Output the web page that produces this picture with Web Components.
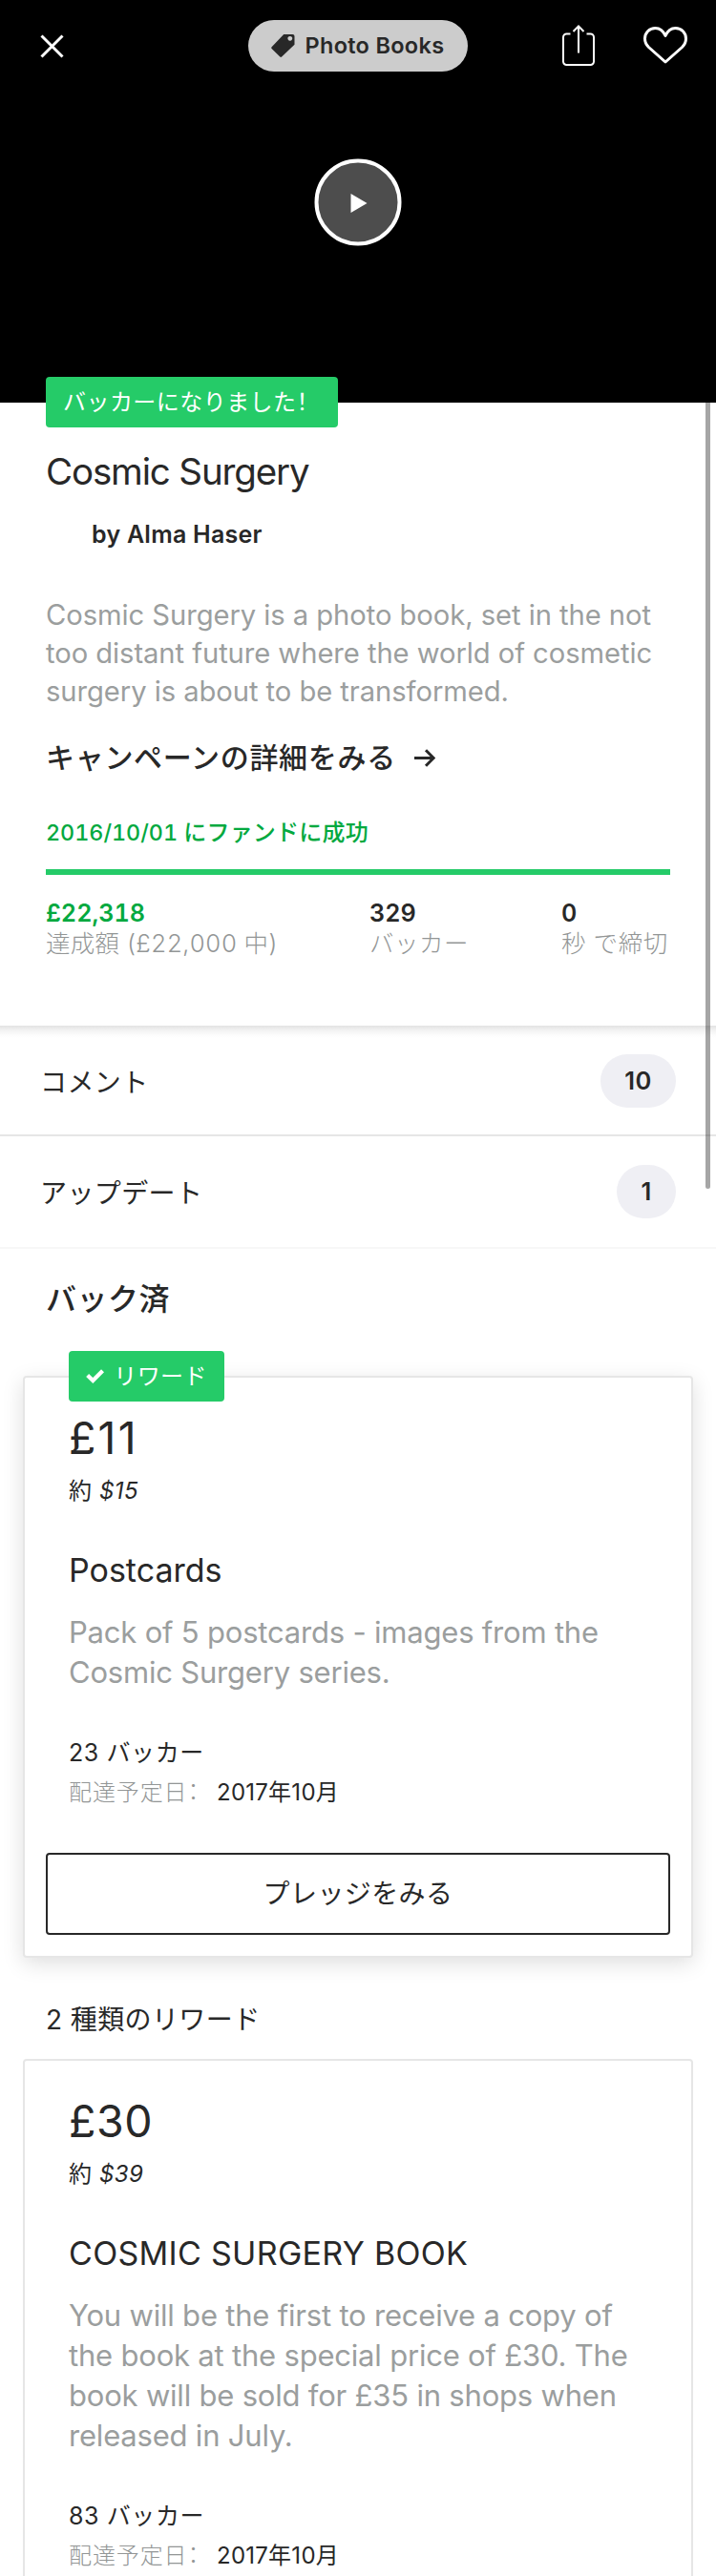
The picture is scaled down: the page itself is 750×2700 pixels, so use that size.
<!DOCTYPE html>
<html lang="ja">
<head>
<meta charset="utf-8">
<title>Cosmic Surgery</title>
<style>
  html, body { margin: 0; }
  body {
    width: 750px; height: 2700px; overflow: hidden; background: #fff; color: #282828;
    font-family: Inter, "Noto Sans CJK JP", sans-serif;
  }
</style>
</head>
<body>
<project-page>
  <project-hero>Photo Books</project-hero>
  <project-summary>
    <status-badge slot="badge" style="width:306px"><span>バッカーになりました<span style="font-feature-settings:'halt'">！</span></span></status-badge>
    <span slot="title">Cosmic Surgery</span>
    <span slot="author">by Alma Haser</span>
    <span slot="blurb">Cosmic Surgery is a photo book, set in the not too distant future where the world of cosmetic surgery is about to be transformed.</span>
    <span slot="link">キャンペーンの詳細をみる</span>
    <span slot="date">2016/10/01 <span style="font-size:24px;letter-spacing:.2px">にファンドに成功</span></span>
    <funding-stat slot="stats" value="£22,318" style="--value:#03a93f">達成額 (£22,000 中)</funding-stat>
    <funding-stat slot="stats" value="329" style="--label-spacing:.5px">バッカー</funding-stat>
    <funding-stat slot="stats" value="0" style="--label-spacing:.6px">秒 で締切</funding-stat>
  </project-summary>
  <count-row class="first" count="10">コメント</count-row>
  <count-row class="last" count="1">アップデート</count-row>
  <section-title class="strong">バック済</section-title>
  <reward-card raised price="£11" approx="$15" backers="23" date="2017年10月" style="--price-spacing:2.2px">
    <status-badge slot="badge" check style="width:163px">リワード</status-badge>
    <span slot="title">Postcards</span>
    Pack of 5 postcards - images from the Cosmic Surgery series.
    <pledge-button slot="action">プレッジをみる</pledge-button>
  </reward-card>
  <section-title>2 種類のリワード</section-title>
  <reward-card price="£30" approx="$39" backers="83" date="2017年10月">
    <span slot="title" style="letter-spacing:.3px">COSMIC SURGERY BOOK</span>
    You will be the first to receive a copy of the book at the special price of £30. The book will be sold for £35 in shops when released in July.
  </reward-card>
</project-page>

<script>
const define = (name, html, setup) => {
  const tpl = document.createElement('template');
  tpl.innerHTML = html;
  customElements.define(name, class extends HTMLElement {
    constructor() {
      super();
      this.attachShadow({ mode: 'open' }).append(tpl.content.cloneNode(true));
    }
    connectedCallback() { if (setup) setup(this, this.shadowRoot); }
  });
};
const fill = (root, id, text) => { root.getElementById(id).textContent = text; };

define('project-page', `
<style>
  :host { display: block; position: relative; height: 2700px; overflow: hidden; }
  .bar { position: absolute; z-index: 5; top: 422px; right: 6px; width: 5px; height: 824px;
         border-radius: 0 0 3px 3px; background: rgba(0,0,0,.35); }
</style>
<slot></slot><div class="bar"></div>`);

define('project-hero', `
<style>
  :host { display: block; height: 422px; background: #000; color: #fff; }
  header { display: grid; grid-template-columns: 1fr auto 1fr; align-items: center; height: 96px; padding: 0 30px; }
  svg { display: block; }
  .close { margin-left: 12px; }
  .pill { display: flex; align-items: center; box-sizing: border-box; width: 230px; height: 54px; padding-left: 24px; gap: 10.5px;
          border-radius: 27px; background: #ccc; color: #282828; font: 600 23.5px/54px Inter, sans-serif; letter-spacing: .3px; white-space: nowrap; }
  .actions { display: flex; justify-content: flex-end; align-items: center; gap: 51px; padding-bottom: 2px; }
  .play { display: block; margin: 70px auto 0; }
</style>
<header>
  <svg class="close" width="25" height="25" viewBox="0 0 25 25" stroke="#fff" stroke-width="3" fill="none"><path d="M1.5 1.5l22 22M23.5 1.5l-22 22"/></svg>
  <div class="pill">
    <svg width="25" height="25" viewBox="0 0 25 25" fill="#282828"><path fill-rule="evenodd" d="M13.2 0H22.500Q24.500 0 24.500 2V10.800L11.100 23.600Q10.200 24.400 9.300 23.600L.6 15Q-.2 14.100 .6 13.200ZM19.800 1.900a2.400 2.400 0 1 0 .01 0Z"/></svg>
    <slot></slot>
  </div>
  <div class="actions">
    <svg width="34" height="43" viewBox="0 0 34 43" stroke="#fff" stroke-width="2" fill="none"><path d="M8.500 9.500H4.500A3.500 3.500 0 0 0 1 13v25.500A3.500 3.500 0 0 0 4.500 42h25a3.500 3.500 0 0 0 3.500-3.500V13a3.500 3.500 0 0 0-3.500-3.500H25.500M17 29.500V1.500M11.500 7L17 1.500 22.500 7"/></svg>
    <svg width="46" height="39" viewBox="0 0 46 39" stroke="#fff" stroke-width="3" stroke-linejoin="round" fill="none"><path d="M23 9.500C20.500 4 16.500 1.500 12.500 1.500 6 1.500 1.500 6.500 1.500 12.500 1.500 16 3 19 5.500 21.500L23 37 40.500 21.500C43 19 44.500 16 44.500 12.500 44.500 6.500 40 1.500 33.500 1.500 29.500 1.500 25.500 4 23 9.500Z"/></svg>
  </div>
</header>
<svg class="play" width="92" height="92" viewBox="0 0 92 92"><circle cx="46" cy="46" r="43.500" fill="#4d4d4d" stroke="#fff" stroke-width="4"/><path d="M38.500 37v20L55.500 47Z" fill="#fff"/></svg>`);

define('status-badge', `
<style>
  :host { display: flex; align-items: center; position: relative; box-sizing: border-box; height: 53px; padding: 0 18px; gap: 10px;
          border-radius: 4px; background: #25cb68; color: #fff; font-size: 24px; font-weight: 400; line-height: 53px; letter-spacing: .45px; white-space: nowrap; }
  svg { display: none; }
  :host([check]) svg { display: block; }
</style>
<svg width="21" height="17" viewBox="0 0 21 17" fill="none" stroke="#fff" stroke-width="4.600"><path d="M1.800 7.500L8 13.500 19.200 2.200"/></svg>
<slot></slot>`);

define('project-summary', `
<style>
  :host { display: flow-root; box-sizing: border-box; height: 653px; padding: 0 48px; }
  .badge { display: flex; margin-top: -27px; height: 53px; }
  h1 { margin: 22px 0 0; font-weight: 400; font-size: 38.500px; line-height: 49px; letter-spacing: -1.150px; }
  .by { margin: 26px 0 0 48px; font-weight: 600; font-size: 25px; line-height: 30px; letter-spacing: .25px; }
  .blurb { margin: 50px 0 0; font-size: 29.200px; line-height: 40px; letter-spacing: -.06px; color: #9b9e9e; }
  .link { display: flex; align-items: center; gap: 19px; margin-top: 29px; font-weight: 500; font-size: 30px; line-height: 40px; letter-spacing: .7px; }
  .date { margin-top: 44px; font-weight: 500; font-size: 23.300px; line-height: 30px; color: #03a93f; font-variant-numeric: tabular-nums; }
  .progress { height: 6px; margin-top: 23px; background: #25cb68; }
  .stats { display: grid; grid-template-columns: 339px 201px 1fr; margin-top: 25px; white-space: nowrap; }
</style>
<div class="badge"><slot name="badge"></slot></div>
<h1><slot name="title"></slot></h1>
<div class="by"><slot name="author"></slot></div>
<p class="blurb"><slot name="blurb"></slot></p>
<div class="link"><slot name="link"></slot>
  <svg width="22" height="19" viewBox="0 0 22 19" fill="none" stroke="#282828" stroke-width="3"><path d="M0 9.500H20M12 1.200L20.200 9.500 12 17.800"/></svg>
</div>
<div class="date"><slot name="date"></slot></div>
<div class="progress"></div>
<div class="stats"><slot name="stats"></slot></div>`);

define('funding-stat', `
<style>
  :host { display: block; font-variant-numeric: tabular-nums; }
  b { display: block; font-weight: 600; font-size: 25.200px; line-height: 30px; color: var(--value, #282828); }
  span { display: block; margin-top: 1px; font-weight: 300; font-size: 25.500px; line-height: 32px; letter-spacing: var(--label-spacing, .2px); color: #939696; }
</style>
<b id="value"></b><span><slot></slot></span>`,
(el, root) => fill(root, 'value', el.getAttribute('value')));

define('count-row', `
<style>
  :host { display: flex; align-items: center; justify-content: space-between; box-sizing: border-box; height: 118px;
          padding: 0 42px; border-bottom: 2px solid #f7f7f7; font-size: 28px; letter-spacing: .4px; }
  :host(.first) { height: 116px; padding-top: 2px; border-bottom-color: #e6e6e6;
          background: linear-gradient(#e2e2e2, #f3f3f3 5px, #fcfcfc 10px, #fff 13px) no-repeat; }
  b { width: 79px; height: 56px; border-radius: 28px; background: #efeff4; text-align: center;
      font-weight: 600; font-size: 25.500px; line-height: 56px; }
  :host(.last) b { width: 62px; }
</style>
<span><slot></slot></span><b id="count"></b>`,
(el, root) => fill(root, 'count', el.getAttribute('count')));

define('section-title', `
<style>
  :host { display: block; margin: 45px 48px 21px; font-size: 28px; line-height: 40px; letter-spacing: .4px; }
  :host(.strong) { margin: 33px 48px 60px; font-size: 32px; font-weight: 500; letter-spacing: .5px; }
</style>
<slot></slot>`);

define('reward-card', `
<style>
  :host { display: block; position: relative; margin: 0 24px; padding: 35px 46px 22px; border: 2px solid #e6e6e6; border-radius: 4px; background: #fff; }
  :host([raised]) { box-shadow: 0 6px 22px rgba(0,0,0,.13); }
  .badge { position: absolute; top: -28px; left: 46px; display: flex; }
  .price { font-size: 46.500px; line-height: 56px; letter-spacing: var(--price-spacing, .5px); }
  .approx { display: flex; gap: 8px; margin-top: 13px; font-size: 24px; line-height: 30px; }
  .approx i { letter-spacing: .4px; }
  h2 { margin: 48px 0 0; font-weight: 400; font-size: 34px; line-height: 40px; }
  p { margin: 24px 0 0; font-size: 31px; line-height: 42px; letter-spacing: -.2px; color: #9b9e9e; }
  .backers { margin-top: 48px; font-size: 25px; line-height: 30px; letter-spacing: .6px; }
  .delivery { display: flex; gap: 6px; margin-top: 12px; font-size: 24px; line-height: 30px; white-space: nowrap; }
  .label { width: 149px; font-weight: 300; letter-spacing: .9px; color: #939696; }
  .label span { font-feature-settings: 'halt'; }
  #date { letter-spacing: .25px; }
</style>
<div class="badge"><slot name="badge"></slot></div>
<div class="price" id="price"></div>
<div class="approx"><span>約</span><i id="approx"></i></div>
<h2><slot name="title"></slot></h2>
<p><slot></slot></p>
<div class="backers"><span id="backers"></span> バッカー</div>
<div class="delivery"><div class="label">配達予定日<span>：</span></div><div id="date"></div></div>
<slot name="action"></slot>`,
(el, root) => ['price', 'approx', 'backers', 'date'].forEach(k => fill(root, k, el.getAttribute(k))));

define('pledge-button', `
<style>
  :host { display: block; box-sizing: border-box; height: 86px; margin: 48px -24px 0; border: 2px solid #282828; border-radius: 4px;
          text-align: center; font-size: 28px; line-height: 82px; letter-spacing: .4px; }
</style>
<slot></slot>`);
</script>
</body>
</html>
